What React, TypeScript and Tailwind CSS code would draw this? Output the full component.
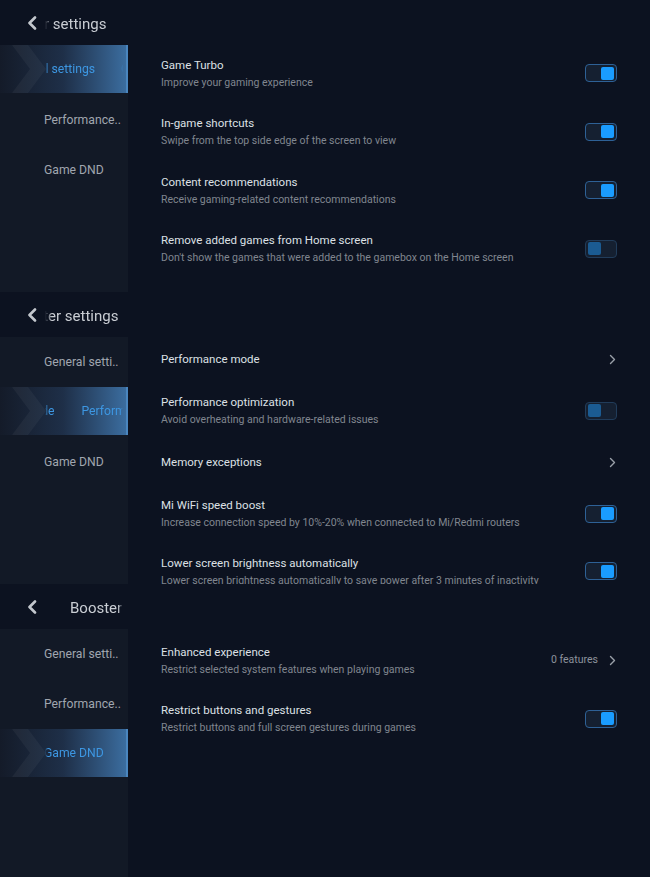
import React from "react";

function Toggle({ on }: { on: boolean }) {
  return on ? (
    <div className="w-[32px] h-[18px] rounded-[4px] border border-[#2e6196] bg-[#152031] flex items-center justify-end px-[2px] shrink-0">
      <div className="w-[13px] h-[13px] rounded-[2px] bg-[#1a9cff]" />
    </div>
  ) : (
    <div className="w-[32px] h-[18px] rounded-[4px] border border-[#213c5a] bg-[#152031] flex items-center justify-start px-[2px] shrink-0">
      <div className="w-[13px] h-[13px] rounded-[2px] bg-[#1b5b92]" />
    </div>
  );
}

function ChevronRight() {
  return (
    <svg width="7" height="11" viewBox="0 0 7 11" className="shrink-0">
      <path d="M1.5 1.5 L5.5 5.5 L1.5 9.5" fill="none" stroke="#9aa0a8" strokeWidth="1.4" strokeLinecap="round" strokeLinejoin="round" />
    </svg>
  );
}

type Right = { kind: "on" } | { kind: "off" } | { kind: "chev"; note?: string };

function Row({ title, sub, right, h }: { title: string; sub?: string; right: Right; h: string }) {
  return (
    <div className={`flex items-center justify-between shrink-0 ${h}`}>
      <div className="flex flex-col min-w-0">
        <div className="text-[11.5px] leading-[16px] font-normal text-[#dde0e5] whitespace-nowrap">{title}</div>
        {sub && <div className="text-[10.5px] leading-[14px] mt-[3px] text-[#80868f] whitespace-nowrap">{sub}</div>}
      </div>
      {right.kind === "on" && <Toggle on />}
      {right.kind === "off" && <Toggle on={false} />}
      {right.kind === "chev" && (
        <div className="flex items-center gap-[11px] pr-[1px]">
          {right.note && <span className="text-[10.5px] text-[#8d939c]">{right.note}</span>}
          <ChevronRight />
        </div>
      )}
    </div>
  );
}

function BackChevron() {
  return (
    <svg width="12" height="14" viewBox="0 0 12 14" className="shrink-0">
      <path d="M9 1.5 L3.5 7 L9 12.5" fill="none" stroke="#c3c7cd" strokeWidth="2.6" strokeLinecap="round" strokeLinejoin="round" />
    </svg>
  );
}

function Header({ offset }: { offset: string }) {
  return (
    <div className="h-[45px] flex items-center pl-[26px] pt-[1px] shrink-0">
      <BackChevron />
      <div className="ml-[7px] w-[78px] overflow-hidden [mask-image:linear-gradient(to_right,transparent,black_7px,black_calc(100%-5px),transparent)]">
        <div className={`whitespace-nowrap text-[15px] text-[#c9cdd3] pt-[2px] ${offset}`}>Booster settings</div>
      </div>
    </div>
  );
}

function SelectedItem({ children }: { children: React.ReactNode }) {
  return (
    <div className="h-[50px] flex items-start shrink-0">
      <div className="relative h-[48px] w-full bg-linear-to-r from-[#141b29] via-[#1e2f48] to-[#3b6d9f] border-r-2 border-[#4a86bf] flex items-center">
        <svg width="50" height="48" viewBox="0 0 50 48" className="absolute left-0 top-0">
          <polygon points="12,0 28,0 46,24 28,48 12,48 30,24" fill="#ffffff" fillOpacity="0.045" />
        </svg>
        <div className="ml-[45px] w-[78px] overflow-hidden pt-[1px] [mask-image:linear-gradient(to_right,transparent,black_3px,black_calc(100%-3px),transparent)]">
          {children}
        </div>
      </div>
    </div>
  );
}

function Item({ label }: { label: string }) {
  return (
    <div className="h-[50px] flex items-center pl-[44px] text-[12.2px] text-[#a0a6af] whitespace-nowrap shrink-0">{label}</div>
  );
}

function Panel({
  h,
  titleOffset,
  items,
  children,
}: {
  h: string;
  titleOffset: string;
  items: React.ReactNode;
  children: React.ReactNode;
}) {
  return (
    <div className={`${h} flex overflow-hidden shrink-0`}>
      <div className="w-[128px] flex flex-col shrink-0">
        <Header offset={titleOffset} />
        <div className="flex-1 flex flex-col bg-[#121926]">{items}</div>
      </div>
      <div className="flex-1 flex flex-col pl-[33px] pr-[33px] overflow-hidden">{children}</div>
    </div>
  );
}

export default function App() {
  return (
    <div className="w-[650px] h-[877px] bg-[#0c1220] font-['Roboto',sans-serif] flex flex-col overflow-hidden">
      <Panel
        h="h-[292px]"
        titleOffset="ml-[-48px]"
        items={
          <>
            <SelectedItem>
              <div className="flex gap-[26px] ml-[-38px] whitespace-nowrap text-[12.2px] text-[#3d97e2]">
                <span>General settings</span>
                <span>General settings</span>
              </div>
            </SelectedItem>
            <Item label="Performance.." />
            <Item label="Game DND" />
          </>
        }
      >
        <div className="h-[44px] shrink-0" />
        <Row h="h-[58.5px]" title="Game Turbo" sub="Improve your gaming experience" right={{ kind: "on" }} />
        <Row h="h-[58.5px]" title="In-game shortcuts" sub="Swipe from the top side edge of the screen to view" right={{ kind: "on" }} />
        <Row h="h-[58.5px]" title="Content recommendations" sub="Receive gaming-related content recommendations" right={{ kind: "on" }} />
        <Row
          h="h-[58.5px]"
          title="Remove added games from Home screen"
          sub="Don't show the games that were added to the gamebox on the Home screen"
          right={{ kind: "off" }}
        />
      </Panel>

      <Panel
        h="h-[292px]"
        titleOffset="ml-[-36px]"
        items={
          <>
            <Item label="General setti.." />
            <SelectedItem>
              <div className="flex gap-[27px] ml-[-95px] whitespace-nowrap text-[12.2px] text-[#3d97e2]">
                <span>Performance mode</span>
                <span>Performance mode</span>
              </div>
            </SelectedItem>
            <Item label="Game DND" />
          </>
        }
      >
        <div className="h-[41px] shrink-0" />
        <Row h="h-[52px]" title="Performance mode" right={{ kind: "chev" }} />
        <Row h="h-[51px]" title="Performance optimization" sub="Avoid overheating and hardware-related issues" right={{ kind: "off" }} />
        <Row h="h-[52px]" title="Memory exceptions" right={{ kind: "chev" }} />
        <Row
          h="h-[51px]"
          title="Mi WiFi speed boost"
          sub="Increase connection speed by 10%-20% when connected to Mi/Redmi routers"
          right={{ kind: "on" }}
        />
        <Row
          h="h-[64px]"
          title="Lower screen brightness automatically"
          sub="Lower screen brightness automatically to save power after 3 minutes of inactivity"
          right={{ kind: "on" }}
        />
      </Panel>

      <Panel
        h="h-[293px]"
        titleOffset="ml-[25px]"
        items={
          <>
            <Item label="General setti.." />
            <Item label="Performance.." />
            <SelectedItem>
              <div className="whitespace-nowrap text-[12.2px] text-[#3d97e2] ml-[-1px]">Game DND</div>
            </SelectedItem>
          </>
        }
      >
        <div className="h-[47px] shrink-0" />
        <Row
          h="h-[58px]"
          title="Enhanced experience"
          sub="Restrict selected system features when playing games"
          right={{ kind: "chev", note: "0 features" }}
        />
        <Row
          h="h-[59px]"
          title="Restrict buttons and gestures"
          sub="Restrict buttons and full screen gestures during games"
          right={{ kind: "on" }}
        />
      </Panel>
    </div>
  );
}
